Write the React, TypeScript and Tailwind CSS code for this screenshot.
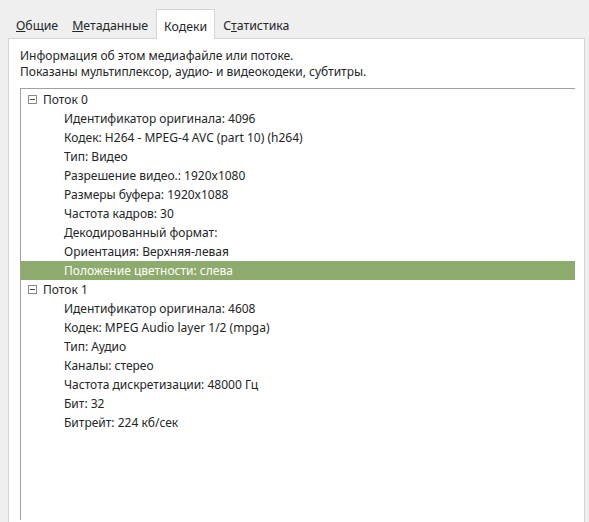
import React from 'react';

const streams = [
  {
    title: 'Поток 0',
    props: [
      'Идентификатор оригинала: 4096',
      'Кодек: H264 - MPEG-4 AVC (part 10) (h264)',
      'Тип: Видео',
      'Разрешение видео.: 1920x1080',
      'Размеры буфера: 1920x1088',
      'Частота кадров: 30',
      'Декодированный формат:',
      'Ориентация: Верхняя-левая',
      'Положение цветности: слева',
    ],
  },
  {
    title: 'Поток 1',
    props: [
      'Идентификатор оригинала: 4608',
      'Кодек: MPEG Audio layer 1/2 (mpga)',
      'Тип: Аудио',
      'Каналы: стерео',
      'Частота дискретизации: 48000 Гц',
      'Бит: 32',
      'Битрейт: 224 кб/сек',
    ],
  },
];

const selected = 'Положение цветности: слева';

function Expander() {
  return (
    <span className="w-[9px] h-[9px] border border-[#8a8a8a] bg-white flex items-center justify-center mr-[6px]">
      <span className="w-[5px] h-px bg-[#444]" />
    </span>
  );
}

export default function App() {
  return (
    <div className="w-[589px] h-[522px] bg-[#efefef] text-[#232627] text-[12px] font-['Noto_Sans',sans-serif] overflow-hidden flex flex-col">
      <div className="flex items-end h-[38px] pl-[8px] relative z-10 text-[12.3px]">
        <div className="px-[8px] h-[29px] pt-[5px] flex items-center">
          <u>О</u>бщие
        </div>
        <div className="px-[7px] h-[29px] pt-[5px] flex items-center ml-[-1px]">
          <u>М</u>етаданные
        </div>
        <div className="px-[7px] h-[30px] pt-[5px] flex items-center bg-white border border-b-0 border-[#d4d4d4] mb-[-1px] ml-[1px]">
          Ко<u>д</u>еки
        </div>
        <div className="pl-[8px] pr-[7px] h-[29px] pt-[5px] flex items-center">
          С<u>т</u>атистика
        </div>
      </div>
      <div className="flex-1 ml-[8px] mr-[4px] bg-white border border-b-0 border-[#d4d4d4] flex flex-col pl-[11px] pr-[9px] pt-[9px]">
        <div className="leading-[16px] mb-[8px]">
          <div>Информация об этом медиафайле или потоке.</div>
          <div>Показаны мультиплексор, аудио- и видеокодеки, субтитры.</div>
        </div>
        <div className="flex-1 border-l border-t border-[#a0a0a0] mb-[2px] pt-[1px]">
          {streams.map((s) => (
            <div key={s.title}>
              <div className="h-[19px] flex items-center pl-[7px]">
                <Expander />
                <span>{s.title}</span>
              </div>
              {s.props.map((p) => (
                <div
                  key={p}
                  className={`h-[19px] flex items-center pl-[43px] ${p === selected ? 'bg-[#8dab6c] text-white' : ''}`}
                >
                  {p}
                </div>
              ))}
            </div>
          ))}
        </div>
      </div>
    </div>
  );
}
